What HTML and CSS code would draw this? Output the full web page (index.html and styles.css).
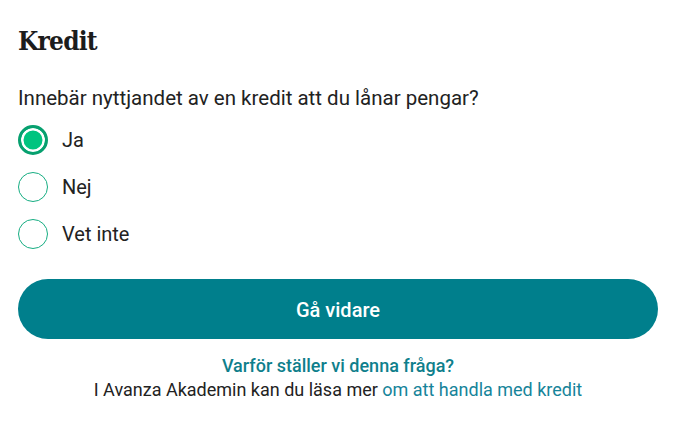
FILE: index.html
```html
<!DOCTYPE html>
<html lang="sv">
<head>
<meta charset="utf-8">
<link rel="stylesheet" href="styles.css">
</head>
<body>
<main class="page">
  <h1 class="title">Kredit</h1>
  <p class="question">Innebär nyttjandet av en kredit att du lånar pengar?</p>
  <div class="options">
    <label class="option"><span class="radio checked"></span><span class="label">Ja</span></label>
    <label class="option"><span class="radio"></span><span class="label">Nej</span></label>
    <label class="option"><span class="radio"></span><span class="label">Vet inte</span></label>
  </div>
  <button class="btn">Gå vidare</button>
  <div class="info">
    <a class="why" href="#">Varför ställer vi denna fråga?</a>
    <p class="more">I Avanza Akademin kan du läsa mer <a href="#">om att handla med kredit</a></p>
  </div>
</main>
</body>
</html>
```
FILE: styles.css
```css
* { box-sizing: border-box; }
body {
  margin: 0;
  background: #fff;
  font-family: Roboto, "Liberation Sans", sans-serif;
  color: #222;
}
.page {
  padding: 26px 25px 0 18px;
  display: flex;
  flex-direction: column;
}
.title {
  margin: 0;
  font-family: "DejaVu Serif Condensed", "DejaVu Serif", serif;
  font-stretch: condensed;
  font-weight: bold;
  font-size: 26px;
  line-height: 30px;
  letter-spacing: -0.8px;
  color: #1c1c1c;
}
.question {
  margin: 30px 0 0;
  font-size: 20.5px;
  line-height: 24px;
}
.options {
  margin-top: 15px;
  display: flex;
  flex-direction: column;
  gap: 17px;
}
.option {
  display: flex;
  align-items: center;
  gap: 14px;
  height: 30px;
  font-size: 20px;
}
.radio {
  width: 30px;
  height: 30px;
  border-radius: 50%;
  border: 1.2px solid #16ad82;
  flex: none;
  background: #fff;
}
.radio.checked {
  border: 3px solid #07a06f;
  background: #00c47f;
  box-shadow: inset 0 0 0 2.5px #fff;
}
.btn {
  margin-top: 30px;
  height: 60px;
  border: none;
  border-radius: 30px;
  background: #007f8c;
  color: #fff;
  font-family: Roboto, "Liberation Sans", sans-serif;
  font-weight: 500;
  font-size: 20px;
  padding-top: 2px;
  width: 100%;
}
.info {
  margin-top: 15px;
  display: flex;
  flex-direction: column;
  align-items: center;
  font-size: 18px;
  line-height: 24px;
}
.why {
  color: #0f7f8c;
  font-weight: 500;
  text-decoration: none;
}
.more { margin: 0; }
.more a { color: #16849a; text-decoration: none; }
```
